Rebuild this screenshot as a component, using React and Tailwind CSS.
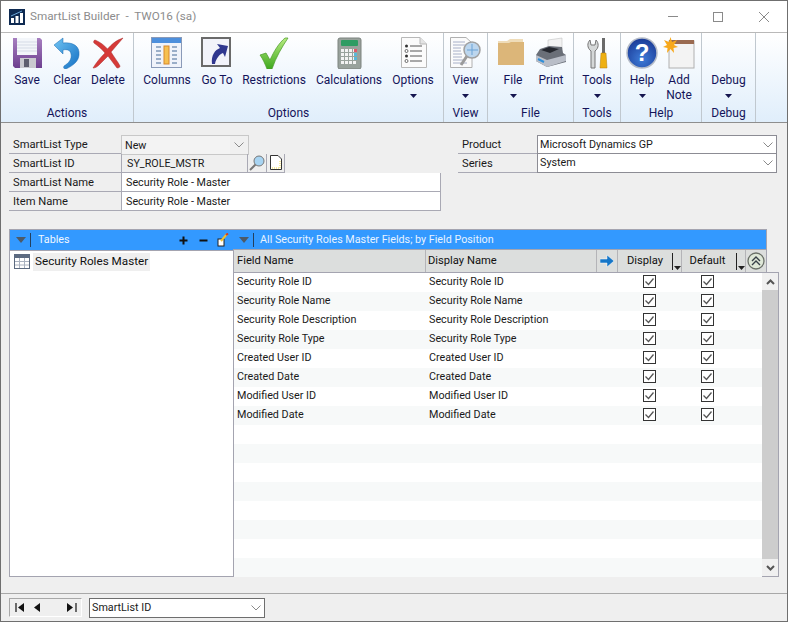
import React from "react";

const IconSave = () => (
  <svg width="32" height="32" viewBox="0 0 32 32">
    <defs><linearGradient id="sv" x1="0" y1="0" x2="0" y2="1"><stop offset="0" stopColor="#a77fc0"/><stop offset="1" stopColor="#6d3f8f"/></linearGradient></defs>
    <path d="M2 1h27l2 2v28H4l-2-2z" fill="url(#sv)"/>
    <rect x="6" y="1" width="20" height="17" fill="#f3f6fa"/>
    <path d="M6 5h20M6 8h20M6 11h20M6 14h20" stroke="#d5dbe6" strokeWidth="1"/>
    <rect x="9" y="21" width="16" height="10" fill="#c9c9cf"/>
    <rect x="13" y="22" width="5" height="8" fill="#5e5e6e"/>
  </svg>
);
const IconClear = () => (
  <svg width="32" height="32" viewBox="0 0 32 32">
    <defs><linearGradient id="cl" x1="0" y1="0" x2="1" y2="1"><stop offset="0" stopColor="#6fc3f2"/><stop offset="1" stopColor="#1470c4"/></linearGradient></defs>
    <path d="M3 8 L12 1 L12 6 C22 5 29 9 28 18 C27.500 25 21 29 15 32 C13 32 12 31 13 29 C18 26 21 22 20 17 C19.500 13 16 12 12 13 L12 17 Z" fill="url(#cl)" stroke="#1a6ab0" strokeWidth=".5"/>
  </svg>
);
const IconDelete = () => (
  <svg width="32" height="32" viewBox="0 0 32 32">
    <path d="M31 1 C24 3 19 8 15.500 12 C12 8 8 5 3 3 C2 3 1 5 2 6 C6 9 10 12 13 16 C8 21 4 26 1 31 C3 31 5 30 7 28 C10 25 13 22 16 19 C19 23 22 27 25 31 C27 31 28 30 28 29 C26 25 22 20 19 15 C23 10 27 6 31 1Z" fill="#d63a38" stroke="#a82a2a" strokeWidth=".5"/>
  </svg>
);
const IconColumns = () => (
  <svg width="32" height="32" viewBox="0 0 32 32">
    <rect x=".5" y=".5" width="30" height="30" fill="#f0f3fa" stroke="#8a9ab8"/>
    <rect x="1" y="1" width="29" height="5" fill="#4d8fdc"/>
    <rect x="13" y="9" width="5" height="18" fill="#f6c050" stroke="#d8882a"/>
    <path d="M5 10h5M5 14h5M5 18h5M5 22h5M5 26h5M21 10h5M21 14h5M21 18h5M21 22h5M21 26h5" stroke="#9aaec8" strokeWidth="2"/>
  </svg>
);
const IconGoTo = () => (
  <svg width="32" height="32" viewBox="0 0 32 32">
    <rect x="1" y="1" width="28" height="28" fill="#f2f3fa" stroke="#6a6a6a" strokeWidth="2"/>
    <path d="M11 27 C10 18 14 13 19 11 L16 7 L27 9 L24 20 L22 16 C19 17 15 21 14 27Z" fill="#30378f"/>
  </svg>
);
const IconCheck = () => (
  <svg width="32" height="32" viewBox="0 0 32 32">
    <defs><linearGradient id="ck" x1="0" y1="0" x2="0" y2="1"><stop offset="0" stopColor="#b8ec80"/><stop offset="1" stopColor="#3da81e"/></linearGradient></defs>
    <path d="M2 18 L8 16 L12 23 C16 14 21 6 27 1 L30 1 C24 10 18 20 14 32 L9 32 C7 27 5 22 2 18Z" fill="url(#ck)" stroke="#4a9a2a" strokeWidth=".7"/>
  </svg>
);
const IconCalc = () => (
  <svg width="32" height="32" viewBox="0 0 32 32">
    <rect x="5" y="1" width="23" height="31" rx="2" fill="#99a29c" stroke="#7c837f"/>
    <rect x="8" y="3" width="17" height="6" rx="1" fill="#2f9c63"/>
    <g fill="#f3f3f3">
      {[12, 16, 20, 24].map((y) => [8, 12, 16, 20].map((x) => <rect key={x + "-" + y} x={x} y={y} width="3" height="3" />))}
    </g>
    <rect x="21" y="12" width="3" height="3" fill="#e05a6a"/>
    <rect x="21" y="16" width="3" height="3" fill="#58b8d8"/>
    <rect x="21" y="20" width="3" height="3" fill="#58b8d8"/>
  </svg>
);
const IconOptions = () => (
  <svg width="32" height="32" viewBox="0 0 32 32">
    <path d="M4.500 .5H23L29.500 7V30.500H4.500Z" fill="#fbfbfb" stroke="#b8b8b8"/>
    <path d="M23 .5V7H29.500" fill="#e4e4e4" stroke="#b8b8b8"/>
    <circle cx="9.500" cy="9" r="1.500" fill="#333"/><circle cx="9.500" cy="14" r="1.500" fill="#fff" stroke="#333" strokeWidth=".7"/>
    <circle cx="9.500" cy="19" r="1.500" fill="#333"/><circle cx="9.500" cy="24" r="1.500" fill="#fff" stroke="#333" strokeWidth=".7"/>
    <path d="M13 9h12M13 14h12M13 19h12M13 24h12" stroke="#555"/>
  </svg>
);
const IconView = () => (
  <svg width="32" height="32" viewBox="0 0 32 32">
    <path d="M.5 .5H16L22 6V30.500H.5Z" fill="#fbfbfb" stroke="#b0b0b0"/>
    <path d="M3 5h12M3 8h12M3 11h8M3 14h8M3 17h9M3 20h9M3 23h12M3 26h14" stroke="#a8b0c8"/>
    <path d="M17 19 L11 28" stroke="#9b9b9b" strokeWidth="3"/>
    <circle cx="22" cy="13" r="8" fill="#bcd6ee" stroke="#a0a0a0" strokeWidth="1.500"/>
    <path d="M22 7v11M17 13h11" stroke="#6aa3d6"/>
  </svg>
);
const IconFolder = () => (
  <svg width="32" height="32" viewBox="0 0 32 32">
    <path d="M1 4 H10 L13 2 H26 V7 H1Z" fill="#efdcb8"/>
    <path d="M1 6 H12 L14 5 H27 V28 H1Z" fill="#dcb679"/>
  </svg>
);
const IconPrint = () => (
  <svg width="32" height="32" viewBox="0 0 32 32">
    <path d="M13 3 L27 1 L27 12 L13 14Z" fill="#f2f2f2" stroke="#bbb" strokeWidth=".5"/>
    <path d="M5 12 L14 9 L27 10 L28 16 L31 18 L31 25 L12 30 L1 24 L1 18Z" fill="#6a6f78"/>
    <path d="M1 18 L12 23 L31 18 L31 24 L12 30 L1 24Z" fill="#b9bec8"/>
    <path d="M6 13 L14 10 L24 12 L15 16Z" fill="#25282f"/>
    <path d="M3 22 l6 3" stroke="#2f8fd8" strokeWidth="2"/>
  </svg>
);
const IconTools = () => (
  <svg width="32" height="32" viewBox="0 0 32 32">
    <path d="M10 14 V31 H14 V14 C18 11 18 6 15 3 L14 8 L10 8 L9 3 C6 6 6 11 10 14Z" fill="#d5d8d8" stroke="#777"/>
    <rect x="21" y="1" width="3" height="15" fill="#6a6a6a"/>
    <path d="M20 16 H25 L26 31 H19 Z" fill="#eeb012" stroke="#b57f0a" strokeWidth=".5"/>
  </svg>
);
const IconHelp = () => (
  <svg width="32" height="32" viewBox="0 0 32 32">
    <defs><radialGradient id="hp" cx=".5" cy=".7" r=".8"><stop offset="0" stopColor="#3e7cd8"/><stop offset="1" stopColor="#15308c"/></radialGradient></defs>
    <circle cx="16" cy="16" r="15" fill="url(#hp)" stroke="#b5bcc8" strokeWidth="1.500"/>
    <text x="16" y="24" textAnchor="middle" fontSize="24" fontWeight="700" fill="#fff" fontFamily="Liberation Sans, sans-serif">?</text>
  </svg>
);
const IconNote = () => (
  <svg width="32" height="32" viewBox="0 0 32 32">
    <rect x="6" y="4" width="25" height="27" fill="#f3f3f3" stroke="#b0b0b0"/>
    <rect x="6" y="3" width="25" height="4" fill="#9a6a50"/>
    <path d="M7.500 0 L9 5 L14 3 L11 8 L15 10 L10.500 11 L11 16 L7.500 12 L4 16 L4.500 11 L0 10 L4 8 L1 3 L6 5Z" fill="#f7a81a"/>
  </svg>
);
const Caret = () => (
  <svg width="7" height="4" viewBox="0 0 7 4" className="block"><path d="M0 0h7L3.500 4z" fill="#15154f" /></svg>
);

const RButton = ({ w, icon, label, label2, caret }) => (
  <div className={`${w} flex flex-col items-center`}>
    <div className="h-8 flex items-center justify-center">{icon}</div>
    <div className="mt-[3px] leading-[16px] text-center whitespace-nowrap">{label}</div>
    {label2 && <div className="leading-[15px] text-center">{label2}</div>}
    {caret && <div className="mt-[6px]"><Caret /></div>}
  </div>
);

const RGroup = ({ w, pl, label, children }) => (
  <div className={`${w} h-full shrink-0 border-r border-[#c0c8cf] flex flex-col`}>
    <div className={`${pl} pt-[4px] flex h-[69px]`}>{children}</div>
    <div className="text-center leading-[16px] pt-[3px]">{label}</div>
  </div>
);

const Ribbon = () => (
  <div className="h-[91px] flex text-[12px] text-[#14145a] bg-gradient-to-b from-white to-[#e0eefb] border-t border-b border-t-[#b9b9b9] border-b-[#8e8e8e] shrink-0">
    <RGroup w="w-[133px]" pl="pl-[6px]" label="Actions">
      <RButton w="w-[40px]" icon={<IconSave />} label="Save" />
      <RButton w="w-[40px]" icon={<IconClear />} label="Clear" />
      <RButton w="w-[42px]" icon={<IconDelete />} label="Delete" />
    </RGroup>
    <RGroup w="w-[310px]" pl="pl-[5px]" label="Options">
      <RButton w="w-[56px]" icon={<IconColumns />} label="Columns" />
      <RButton w="w-[44px]" icon={<IconGoTo />} label="Go To" />
      <RButton w="w-[70px]" icon={<IconCheck />} label="Restrictions" />
      <RButton w="w-[80px]" icon={<IconCalc />} label="Calculations" />
      <RButton w="w-[48px]" icon={<IconOptions />} label="Options" caret />
    </RGroup>
    <RGroup w="w-[44px]" pl="" label="View">
      <RButton w="w-[43px]" icon={<IconView />} label="View" caret />
    </RGroup>
    <RGroup w="w-[86px]" pl="pl-[7px]" label="File">
      <RButton w="w-[36px]" icon={<IconFolder />} label="File" caret />
      <RButton w="w-[40px]" icon={<IconPrint />} label="Print" />
    </RGroup>
    <RGroup w="w-[47px]" pl="" label="Tools">
      <RButton w="w-[46px]" icon={<IconTools />} label="Tools" caret />
    </RGroup>
    <RGroup w="w-[81px]" pl="pl-[3px]" label="Help">
      <RButton w="w-[36px]" icon={<IconHelp />} label="Help" caret />
      <RButton w="w-[38px]" icon={<IconNote />} label="Add" label2="Note" />
    </RGroup>
    <RGroup w="w-[54px]" pl="" label="Debug">
      <RButton w="w-[53px]" icon={<span className="block w-8 h-8" />} label="Debug" caret />
    </RGroup>
  </div>
);

const Chevron = () => (
  <svg width="12" height="8" viewBox="0 0 12 8"><path d="M1.500 1.500 6 6l4.500-4.500" fill="none" stroke="#8a8a8a" /></svg>
);

const Label = ({ w = "w-[112px]", children }) => (
  <div className={`${w} h-[19px] shrink-0 pl-[4px] text-[11.2px] leading-[20px] border-b border-[#a9a9b4]`}>{children}</div>
);

const Input = ({ className, children }) => (
  <div className={`h-[19px] pl-[4px] leading-[20px] border-l border-b border-r border-[#a9a9b4] bg-white ${className}`}>{children}</div>
);

const SearchIcon = () => (
  <svg width="16" height="16" viewBox="0 0 16 16">
    <path d="M7 9 L1 15" stroke="#777" strokeWidth="2" />
    <circle cx="10" cy="6" r="5" fill="#a8d4f2" stroke="#777" />
  </svg>
);
const PageIcon = () => (
  <svg width="14" height="16" viewBox="0 0 14 16">
    <path d="M1.500 .5H9L12.500 4V14.500H1.500Z" fill="#fff" stroke="#333" />
    <path d="M3 13 L11 13 L11 6" stroke="#f0d840" fill="none" strokeDasharray="1 1" />
  </svg>
);

const Form = () => (
  <div className="h-[106px] pl-[8px] pt-[12px] flex shrink-0">
    <div className="w-[432px] shrink-0">
      <div className="flex h-[19px]">
        <Label>SmartList Type</Label>
        <div className="w-[128px] h-[20px] border border-[#c8c8c8] pl-[3px] bg-[#f3f3f3] flex justify-between items-center">
          <span className="leading-[17px]">New</span>
          <span className="w-[18px] h-[18px] flex items-center justify-center bg-[#f0f0f0]"><Chevron /></span>
        </div>
      </div>
      <div className="flex h-[19px]">
        <Label>SmartList ID</Label>
        <div className="w-[127px] h-[19px] pl-[5px] leading-[20px] border-x border-b border-[#a9a9b4]">SY_ROLE_MSTR</div>
        <div className="w-[19px] h-[19px] border-r border-b border-[#a9a9b4] flex items-center justify-center"><SearchIcon /></div>
        <div className="w-[18px] h-[19px] border-r border-b border-[#a9a9b4] flex items-center justify-center"><PageIcon /></div>
      </div>
      <div className="flex h-[19px]">
        <Label>SmartList Name</Label>
        <Input className="flex-1">Security Role - Master</Input>
      </div>
      <div className="flex h-[19px]">
        <Label>Item Name</Label>
        <Input className="flex-1">Security Role - Master</Input>
      </div>
    </div>
    <div className="ml-[17px] w-[319px] shrink-0">
      <div className="flex h-[19px]">
        <div className="w-[79px] pl-[4px] text-[11.2px] leading-[20px] border-b border-[#a9a9b4]">Product</div>
        <div className="flex-1 bg-white border border-[#8c8c94] pl-[2px] flex justify-between items-center">
          <span className="leading-[15px]">Microsoft Dynamics GP</span><span className="pr-[2px]"><Chevron /></span>
        </div>
      </div>
      <div className="flex h-[19px]">
        <div className="w-[79px] pl-[4px] text-[11.2px] leading-[20px] border-b border-[#a9a9b4]">Series</div>
        <div className="flex-1 bg-white border-x border-b border-[#8c8c94] pl-[2px] flex justify-between items-start">
          <span className="leading-[18px]">System</span><span className="pr-[2px] pt-[5px]"><Chevron /></span>
        </div>
      </div>
    </div>
  </div>
);

const HeadCaret = () => (
  <div className="flex items-center h-full">
    <svg width="10" height="6" viewBox="0 0 10 6" className="ml-[6px]"><path d="M0 0h10L5 6z" fill="#4d5a68" /></svg>
    <span className="ml-[4px] w-px h-[14px] bg-[#24405e]" />
  </div>
);

const ColCaret = () => (
  <div className="flex items-end h-full pb-[2px]">
    <span className="w-px h-[17px] bg-[#222] mr-[1px]" />
    <svg width="7" height="4" viewBox="0 0 7 4"><path d="M0 0h7L3.500 4z" fill="#222" /></svg>
  </div>
);

const Check = () => (
  <span className="w-[13px] h-[13px] border border-[#333] bg-white flex items-center justify-center">
    <svg width="11" height="11" viewBox="0 0 11 11"><path d="M1.500 5.500 4.500 8.500 9.500 2.500" fill="none" stroke="#555" strokeWidth="1.300" /></svg>
  </span>
);

const rows = [
  "Security Role ID", "Security Role Name", "Security Role Description", "Security Role Type",
  "Created User ID", "Created Date", "Modified User ID", "Modified Date",
  "", "", "", "", "", "", "", "",
];

const Panels = () => (
  <div className="flex pl-[8px] h-[348px] shrink-0">
    <div className="w-[224px] shrink-0 flex flex-col border-l border-t border-b border-[#a4a4b0] bg-white">
      <div className="h-[21px] bg-[#3399ff] flex items-center text-white border-b border-[#a4a4b0]">
        <HeadCaret />
        <span className="ml-[7px] flex-1 leading-[18px] text-[#f0f7ff]">Tables</span>
        <svg width="9" height="9" viewBox="0 0 9 9" className="mr-[11px]"><path d="M4.500 .5v8M.5 4.500h8" stroke="#111" strokeWidth="2" /></svg>
        <svg width="9" height="9" viewBox="0 0 9 9" className="mr-[9px]"><path d="M.5 4.500h8" stroke="#111" strokeWidth="2" /></svg>
        <svg width="12" height="14" viewBox="0 0 12 14" className="mr-[4px]">
          <rect x="1" y="6" width="6" height="7" fill="#fff" stroke="#222" />
          <path d="M4 8 L10 1" stroke="#f0c030" strokeWidth="2" />
          <path d="M9 2 L11 .5" stroke="#d04020" strokeWidth="2" />
        </svg>
      </div>
      <div className="flex items-center pl-[4px] pt-[1px] h-[20px]">
        <svg width="16" height="15" viewBox="0 0 16 15" className="shrink-0">
          <rect x=".5" y=".5" width="15" height="14" fill="#fff" stroke="#5c6a80" />
          <rect x="1" y="1" width="14" height="3" fill="#5c6a80" />
          <path d="M5.500 4v10M10.500 4v10M1 7.500h14M1 11h14" stroke="#aab2c0" />
        </svg>
        <span className="ml-[3px] px-[2px] h-[18px] leading-[16px] bg-[#efefef] text-[11.7px] text-[#111] whitespace-nowrap">Security Roles Master</span>
      </div>
    </div>
    <div className="w-[546px] shrink-0 flex flex-col">
      <div className="w-[534px] h-[21px] bg-[#3399ff] flex items-center border-t border-b border-r border-[#a4a4b0]">
        <HeadCaret />
        <span className="ml-[6px] leading-[18px] text-[#e8f3ff]">All Security Roles Master Fields; by Field Position</span>
      </div>
      <div className="w-[534px] h-[22px] flex bg-[#dcdedd] text-[11.2px] text-[#111] shrink-0 border-r border-[#a4a4b0]">
        <div className="w-[193px] pl-[3px] leading-[22px] border-r border-[#b4b4b8] border-l border-l-[#a4a4b0]">Field Name</div>
        <div className="w-[171px] pl-[2px] leading-[22px] border-r border-[#b4b4b8]">Display Name</div>
        <div className="w-[21px] border-r border-[#b4b4b8] flex items-center justify-center">
          <svg width="14" height="12" viewBox="0 0 14 12"><path d="M0 4h7V0l7 6-7 6V8H0z" fill="#1576c8" stroke="#fff" strokeWidth=".5" /></svg>
        </div>
        <div className="w-[64px] border-r border-[#b4b4b8] flex justify-between">
          <span className="flex-1 text-center leading-[22px]">Display</span><ColCaret />
        </div>
        <div className="w-[64px] border-r border-[#b4b4b8] flex justify-between">
          <span className="flex-1 text-center leading-[22px] pr-[3px]">Default</span><ColCaret />
        </div>
        <div className="flex-1 flex items-center justify-center">
          <svg width="18" height="18" viewBox="0 0 18 18">
            <circle cx="9" cy="9" r="8" fill="#dfe8d8" stroke="#6a7068" strokeWidth="1.300" />
            <path d="M5 9 9 5l4 4M5 13l4-4 4 4" fill="none" stroke="#384048" strokeWidth="1.400" />
          </svg>
        </div>
      </div>
      <div className="flex-1 flex border border-t-[#a4a4b0] border-[#a4a4b0] min-h-0">
        <div className="flex-1 flex flex-col">
          {rows.map((n, i) => (
            <div key={i} className={`h-[19px] shrink-0 flex ${i % 2 ? "bg-[#f7f9f9]" : "bg-white"}`}>
              <div className="w-[192px] pl-[3px] leading-[17px] whitespace-nowrap">{n}</div>
              <div className="w-[189px] pl-[3px] leading-[17px] whitespace-nowrap">{n}</div>
              {n && (
                <>
                  <div className="w-[58px] ml-[5px] pt-[2px] flex justify-center"><Check /></div>
                  <div className="w-[58px] pt-[2px] flex justify-center"><Check /></div>
                </>
              )}
            </div>
          ))}
        </div>
        <div className="w-[16px] shrink-0 flex flex-col bg-[#f0f0f0]">
          <div className="h-[17px] flex items-center justify-center">
            <svg width="9" height="6" viewBox="0 0 9 6"><path d="M1 5l3.500-3.500L8 5" fill="none" stroke="#555" strokeWidth="2" /></svg>
          </div>
          <div className="flex-1 bg-[#cdcdcd]" />
          <div className="h-[17px] flex items-center justify-center">
            <svg width="9" height="6" viewBox="0 0 9 6"><path d="M1 1l3.500 3.500L8 1" fill="none" stroke="#555" strokeWidth="2" /></svg>
          </div>
        </div>
      </div>
    </div>
  </div>
);

const Footer = () => (
  <div className="mt-[16px] flex-1 border-t border-[#a8a8a8] pl-[8px] pt-[4px] flex">
    <div className="w-[73px] h-[19px] border border-t-[#a8a8a8] border-l-[#a8a8a8] border-r-white border-b-white flex items-center">
      <svg width="10" height="9" viewBox="0 0 10 9" className="ml-[5px]"><path d="M1 0v9" stroke="#111" strokeWidth="1.200" /><path d="M9 0v9L3 4.500z" fill="#111" /></svg>
      <svg width="6" height="9" viewBox="0 0 6 9" className="ml-[9px]"><path d="M6 0v9L0 4.500z" fill="#111" /></svg>
      <svg width="10" height="9" viewBox="0 0 10 9" className="ml-[27px]"><path d="M0 0v9L6 4.500z" fill="#111" /><path d="M9 0v9" stroke="#111" strokeWidth="1.200" /></svg>
    </div>
    <div className="ml-[7px] w-[176px] h-[20px] border border-[#6e6e6e] bg-white flex items-center justify-between pl-[2px] pr-[2px]">
      <span className="leading-[16px]">SmartList ID</span><Chevron />
    </div>
  </div>
);

export default function App() {
  return (
    <div className="w-[788px] h-[622px] border border-[#6f6f6f] bg-[#efefef] flex flex-col overflow-hidden text-[10.75px] text-[#1a1a1a] font-['Roboto',sans-serif]">
      <div className="h-[31px] bg-white flex items-center shrink-0">
        <svg width="16" height="16" viewBox="0 0 16 16" className="ml-[8px]">
          <rect width="16" height="16" fill="#0e2a52" />
          <path d="M2 14V9h3v5zM6.500 14V7h3v7zM11 14V4h3v10z" fill="#fff" />
          <path d="M2 7 L13 2" stroke="#6aa6d8" />
        </svg>
        <span className="ml-[5px] text-[11.7px] text-[#8c8c8c] whitespace-pre">SmartList Builder  -  TWO16 (sa)</span>
        <div className="ml-auto flex items-center text-[#777]">
          <span className="w-[10px] h-px bg-[#8a8a8a] mr-[35px]" />
          <span className="w-[10px] h-[10px] border border-[#8a8a8a] mr-[36px]" />
          <svg width="10" height="10" viewBox="0 0 10 10" className="mr-[18px]"><path d="M0 0l10 10M10 0L0 10" stroke="#8a8a8a" /></svg>
        </div>
      </div>
      <Ribbon />
      <Form />
      <Panels />
      <Footer />
    </div>
  );
}
